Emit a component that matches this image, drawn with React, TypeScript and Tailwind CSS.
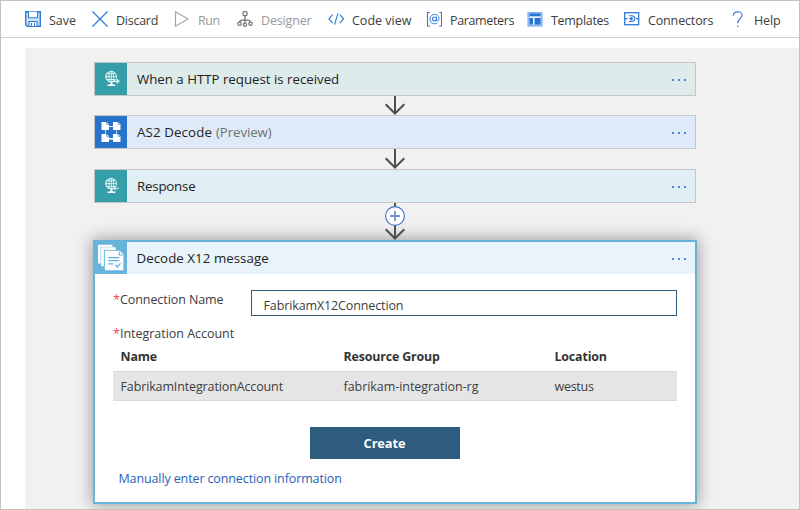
import type { ReactNode } from 'react';

const blue = '#2f7bd9';

function Svg({ children, size = 16 }: { children: ReactNode; size?: number }) {
  return (
    <svg width={size} height={size} viewBox={`0 0 ${size} ${size}`} fill="none" className="block shrink-0">
      {children}
    </svg>
  );
}

const SaveIcon = () => (
  <Svg>
    <path d="M.7.7h14.6v14.6H2.2L.7 13.8z" fill="#cfe1f7" stroke={blue} strokeWidth="1.4" />
    <path d="M3.4.7v6.1h9.2V.7" fill="#fff" stroke={blue} strokeWidth="1.1" />
    <path d="M4 15v-4.5h8V15" fill="#fff" stroke={blue} strokeWidth="1.1" />
    <path d="M6.5 12v3M9.5 12v3" stroke={blue} />
  </Svg>
);

const DiscardIcon = () => (
  <Svg>
    <path d="M.5.5l15 15M15.5.5l-15 15" stroke={blue} strokeWidth="1.3" />
  </Svg>
);

const RunIcon = () => (
  <Svg>
    <path d="M1.5.8v14.4L14 8z" stroke="#a3a3a3" strokeWidth="1.1" />
  </Svg>
);

const DesignerIcon = () => (
  <Svg>
    <g stroke="#747474" strokeWidth="1.25">
      <rect x="6.1" y=".7" width="3.9" height="3.9" rx="1" />
      <path d="M8 4.6v7.2M8 9.2H5.5Q2.9 9.2 2.7 11M8 9.2h2.5q2.6 0 2.8 1.8" />
      <circle cx="2.5" cy="12.7" r="1.7" />
      <circle cx="8" cy="13.7" r="1.6" />
      <circle cx="13.5" cy="12.7" r="1.7" />
    </g>
  </Svg>
);

const CodeIcon = () => (
  <Svg>
    <path d="M4.6 3.7L1 7.9l3.600 4.200M11.900 3.700l3.600 4.200-3.600 4.200M10 2.300L6.500 13.700" stroke={blue} strokeWidth="1.15" />
  </Svg>
);

const ParametersIcon = () => (
  <Svg>
    <path d="M4 1.500H1.500v13.500H4M13.300 1.500h2.200v13.500h-2.200" stroke={blue} strokeWidth="1.1" />
    <circle cx="8.500" cy="8" r="2" stroke={blue} strokeWidth="1.05" />
    <path d="M10.500 5.700v3.500q.3 1.200 1.400.7Q13 9.200 13 7.600 12.700 3.400 8.700 3.400 4.100 3.700 4 8.200q.1 4.400 4.600 4.600 1.600 0 2.700-.8" stroke={blue} strokeWidth=".95" />
  </Svg>
);

const TemplatesIcon = () => (
  <Svg>
    <rect x=".6" y="1.1" width="14.8" height="14.4" fill="#a9c9f0" />
    <rect x="1.1" y="1.6" width="13.8" height="13.4" stroke="#7fb0ea" />
    <path d="M2.5 2.500h11v3h-11zM2.500 7h3.500v6.500H2.500zM7.500 7h6v6.500h-6z" fill="#2673d3" />
    <path d="M2.500 6.200h11M6.700 6.200v7.300" stroke="#fff" strokeWidth="1.2" />
  </Svg>
);

const ConnectorsIcon = () => (
  <Svg>
    <rect x=".7" y="1.7" width="14" height="12" stroke={blue} strokeWidth="1.3" />
    <path d="M1 7.600h2.500M12 7.600h3M5.100 4.700h2.500q3.200.3 3.300 2.900-.1 2.700-3.300 2.900H5.100M5.300 7.600h3M6.400 6.200q2 .1 2 1.400 0 1.400-2 1.500" stroke={blue} strokeWidth="1.1" />
  </Svg>
);

const HelpIcon = () => (
  <Svg>
    <path d="M4.300 4.800Q4.500.7 8.800.7q4.200.2 4.300 3.600 0 2-2.300 3.700-2 1.600-2 4.200" stroke={blue} strokeWidth="1.15" />
    <path d="M8.100 14.600h1.300v1.300H8.100z" fill={blue} />
  </Svg>
);

const tools: { label: string; icon: ReactNode; box: string; text: string }[] = [
  { label: 'Save', icon: <SaveIcon />, box: 'w-[67px]', text: '' },
  { label: 'Discard', icon: <DiscardIcon />, box: 'w-[82px]', text: 'tracking-[-0.25px]' },
  { label: 'Run', icon: <RunIcon />, box: 'w-[63px]', text: 'tracking-[-0.4px] text-[#999]' },
  { label: 'Designer', icon: <DesignerIcon />, box: 'w-[91px]', text: 'tracking-[-0.15px] text-[#999]' },
  { label: 'Code view', icon: <CodeIcon />, box: 'w-[98px]', text: '' },
  { label: 'Parameters', icon: <ParametersIcon />, box: 'w-[101px]', text: 'tracking-[-0.36px]' },
  { label: 'Templates', icon: <TemplatesIcon />, box: 'w-[97px]', text: 'tracking-[-0.3px]' },
  { label: 'Connectors', icon: <ConnectorsIcon />, box: 'w-[105px]', text: 'tracking-[-0.15px]' },
  { label: 'Help', icon: <HelpIcon />, box: 'w-[52px]', text: 'pl-px tracking-[-0.15px]' },
];

function GlobeIcon({ incoming }: { incoming?: boolean }) {
  return (
    <Svg size={32}>
      <g stroke="#e4f5f5" strokeWidth=".9">
        <circle cx="16.3" cy="13.6" r="5.3" />
        <ellipse cx="16.3" cy="13.6" rx="2.4" ry="5.3" />
        <path d="M11 13.600h10.600M12 10.700h8.600M12 16.500h8M16.300 8.300v13.500" />
        <path d="M12.500 9.100q-3.700 4.800.3 9 4 2.700 7.700-.2" />
      </g>
      <path d="M12.500 21.500h2.200l.7-1h2l.7 1h2.200v1.400h-7.800z" fill="#fff" />
      {incoming ? (
        <path d="M24 18.300h-5M21 16.300l-2.200 2 2.200 2" stroke="#d5efef" strokeWidth="1.1" />
      ) : (
        <path d="M18.500 18.300h4.500M21.700 16.200l2.300 2.100-2.300 2.100" stroke="#e4f5f5" strokeWidth="1.2" />
      )}
    </Svg>
  );
}

function Doc({ x, y }: { x: number; y: number }) {
  return (
    <g transform={`translate(${x} ${y})`}>
      <path d="M0 0h5l2.500 2.500V8H0z" fill="#fff" />
      <path d="M5 0v2.500h2.500" stroke="#77a7e2" strokeWidth=".8" />
    </g>
  );
}

const As2Icon = () => (
  <Svg size={32}>
    <path d="M10.500 10.500h11v13h-11z" stroke="#a9c9f1" strokeWidth="1.1" />
    <path d="M14 10.500h4M14 22.500h4" stroke="#fff" strokeWidth="1.2" />
    <Doc x={6.5} y={6} />
    <Doc x={18} y={6} />
    <Doc x={6.5} y={18} />
    <Doc x={18} y={18} />
  </Svg>
);

const X12Icon = () => (
  <Svg size={32}>
    <g fill="#67b3da" stroke="#fff" strokeWidth="1.3">
      <path d="M3.700 3.500h13.200v17.300H3.700z" fill="#eff8fc" />
      <path d="M6.800 6.200H20v17.600H6.800z" fill="#dff0f8" stroke="#67b3da" strokeWidth="2.2" />
      <path d="M6.800 6H20v17.600H6.800z" fill="#eff8fc" />
      <path d="M10.200 9.200h17.300v18.300H10.200z" stroke="#67b3da" strokeWidth="2.5" />
      <path d="M10.500 9.500h14l3.300 3.200v15H10.500z" fill="#fafdff" />
    </g>
    <path d="M24.300 9.500V13h3.500" stroke="#67b3da" strokeWidth="1.1" />
    <path d="M13.300 15.700h11M13.300 18.700h11M13.300 21.800h5M20.300 23l2 2 3.200-3.700" stroke="#67b3da" strokeWidth="1.25" />
  </Svg>
);

function Dots() {
  return (
    <span className="flex gap-1">
      <i className="size-0.5 bg-[#4f86cf]" />
      <i className="size-0.5 bg-[#4f86cf]" />
      <i className="size-0.5 bg-[#4f86cf]" />
    </span>
  );
}

function Step({ icon, iconBg, bg, children }: { icon: ReactNode; iconBg: string; bg: string; children: ReactNode }) {
  return (
    <div className={`ml-px flex h-[34px] w-[602px] shrink-0 items-center border border-[#c6c6c6] ${bg}`}>
      <span className={iconBg}>{icon}</span>
      <span className="flex-1 pl-[10px] text-[13.25px] text-[#222]">{children}</span>
      <span className="mr-[9px] mt-0.5">
        <Dots />
      </span>
    </div>
  );
}

function Arrow({ h }: { h: number }) {
  return (
    <svg width="22" height={h} viewBox={`0 0 22 ${h}`} fill="none" className="ml-[291px] block shrink-0">
      <path d={`M11 0v${h - 1.5}M1.7 ${h - 10.8}l9.3 9.3 9.3-9.3`} stroke="#4f4f4f" strokeWidth="2" />
    </svg>
  );
}

const Star = () => <span className="w-[7px] text-[#e4505a]">*</span>;

export default function App() {
  return (
    <div className="flex h-[510px] w-[800px] flex-col overflow-hidden border border-[#c3c3c3] bg-white font-['Open_Sans','Noto_Sans',sans-serif] text-[12.5px] leading-[18px] text-[#3d3d3d]">
      <header className="flex h-[37px] shrink-0 items-center border-b border-[#cfcfcf] pl-6">
        {tools.map((t) => (
          <div key={t.label} className={`flex h-4 shrink-0 items-center gap-2 ${t.box}`}>
            {t.icon}
            <span className={`mt-[3px] whitespace-nowrap ${t.text}`}>{t.label}</span>
          </div>
        ))}
      </header>

      <main className="ml-6 mt-[10px] flex min-h-0 flex-1 flex-col overflow-hidden bg-[#f1f1f1] pl-[68px] pt-[14px]">
        <Step icon={<GlobeIcon />} iconBg="bg-[#349fa8]" bg="bg-[#deebeb]">
          When a HTTP request is received
        </Step>
        <Arrow h={19} />
        <Step icon={<As2Icon />} iconBg="bg-[#2872cc]" bg="bg-[#deeaf8]">
          <span className="tracking-[0.14px]">AS2 Decode</span>
          <span className="ml-1 tracking-[-0.08px] text-[#707070]">(Preview)</span>
        </Step>
        <Arrow h={20} />
        <Step icon={<GlobeIcon incoming />} iconBg="bg-[#349fa8]" bg="bg-[#e0eff3]">
          <span className="tracking-[-0.18px]">Response</span>
        </Step>
        <div className="relative z-10 h-[37px] shrink-0">
          <Arrow h={37} />
          <svg width="20" height="20" viewBox="0 0 20 20" fill="none" className="absolute left-[292px] top-[3px]">
            <circle cx="10" cy="10" r="9.4" fill="#fff" stroke="#3b70c2" strokeWidth="1.1" />
            <path d="M10 5v10M5 10h10" stroke="#6c93d3" strokeWidth="1.8" />
          </svg>
        </div>

        <section className="h-[264px] w-[604px] shrink-0 border-2 border-[#67b3da] bg-white shadow-[0_0_15px_1px_rgba(0,0,0,0.36)]">
          <div className="flex h-8 items-center bg-[#e8f3fa]">
            <span className="bg-[#67b3da]">
              <X12Icon />
            </span>
            <span className="flex-1 pl-[9.5px] text-[13.25px] tracking-[0.07px] text-[#222]">Decode X12 message</span>
            <span className="mr-[9.5px] mt-0.5">
              <Dots />
            </span>
          </div>

          <div className="flex flex-col px-[18px] pt-4">
            <div className="flex h-[26px]">
              <label className="flex w-[138px] pt-px tracking-[-0.08px]">
                <Star />
                Connection Name
              </label>
              <div className="flex h-[26px] flex-1 items-center border border-[#2c5c7e] pl-[11.5px] pt-1.5 tracking-[-0.12px]">
                FabrikamX12Connection
              </div>
            </div>
            <div className="mt-[9px] flex h-[18px] tracking-[-0.03px]">
              <Star />
              Integration Account
            </div>

            <div className="mt-[5px] grid grid-cols-[223px_211px_1fr] pl-[7.5px] text-[12.4px] font-bold tracking-[-0.15px] text-[#333]">
              <span>Name</span>
              <span>Resource Group</span>
              <span>Location</span>
            </div>
            <div className="mt-[5px] grid h-[30px] grid-cols-[223px_211px_1fr] items-center border-y border-[#dadada] bg-[#e5e5e5] pl-[7.5px] pt-0.5">
              <span className="tracking-[-0.13px]">FabrikamIntegrationAccount</span>
              <span className="tracking-[-0.05px]">fabrikam-integration-rg</span>
              <span className="tracking-[-0.28px]">westus</span>
            </div>

            <button className="ml-[197px] mt-[26px] h-8 w-[150px] bg-[#2d5c7e] pr-px text-[12.8px] font-bold tracking-[-0.1px] text-white">Create</button>
            <a className="ml-[5.5px] mt-[11px] tracking-[-0.12px] text-[#2862b8]">Manually enter connection information</a>
          </div>
        </section>
      </main>
    </div>
  );
}
